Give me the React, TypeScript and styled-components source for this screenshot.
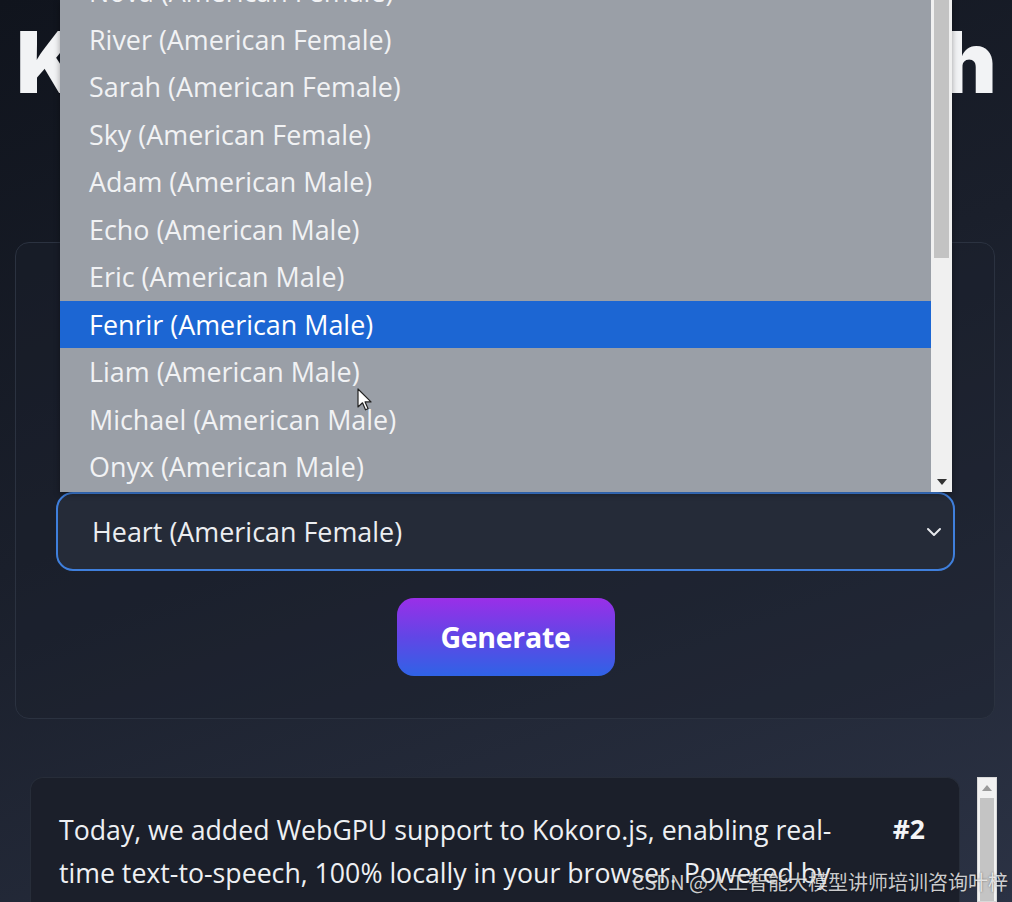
import React from "react";
import styled, { createGlobalStyle } from "styled-components";

const Global = createGlobalStyle`
  html, body { margin: 0; padding: 0; }
  body {
    width: 1012px;
    height: 902px;
    overflow: hidden;
    background: linear-gradient(160deg, #10141d 0%, #1a1f2b 45%, #2b3244 100%);
    font-family: "Open Sans", "Noto Sans", sans-serif;
  }
`;

const Page = styled.div`
  position: relative;
  width: 1012px;
  height: 902px;
  overflow: hidden;
  display: flex;
  flex-direction: column;
`;

const Title = styled.h1`
  margin: 15px 0 0;
  text-align: center;
  white-space: nowrap;
  font-family: Inter, "Liberation Sans", sans-serif;
  font-weight: 900;
  font-size: 85px;
  line-height: 95px;
  letter-spacing: -0.8px;
  color: #f2f3f5;
`;

const Panel = styled.section`
  margin: 132px 17px 0 15px;
  height: 477px;
  box-sizing: border-box;
  border: 1px solid #2b3240;
  border-radius: 14px;
  background: rgba(28, 33, 44, 0.4);
  padding: 0 39px 42px 40px;
  display: flex;
  flex-direction: column;
  justify-content: flex-end;
  align-items: center;
  gap: 27px;
`;

const SelectWrap = styled.div`
  position: relative;
  width: 899px;
  height: 79px;
  box-sizing: border-box;
  border: 2px solid #3f7fdc;
  border-radius: 17px;
  background: #252b38;
  display: flex;
  align-items: center;
  justify-content: space-between;
  padding: 0 9px 0 34px;
  color: #eceef1;
  font-size: 26.9px;
`;

const Chevron = styled.svg`
  width: 20px;
  height: 20px;
`;

const GenerateButton = styled.button`
  width: 218px;
  height: 78px;
  border: none;
  border-radius: 17px;
  background: linear-gradient(180deg, #9a2fe8 0%, #6146e6 50%, #2f63e6 100%);
  color: #ffffff;
  font-family: "Open Sans", sans-serif;
  font-weight: 700;
  font-size: 28.5px;
  letter-spacing: -0.3px;
`;

const Dropdown = styled.div`
  position: absolute;
  left: 2px;
  bottom: calc(100% + 2px);
  width: 892px;
  height: 492px;
  display: flex;
  background: #9a9fa7;
  box-shadow: 0 2px 6px rgba(0, 0, 0, 0.35);
  overflow: hidden;
`;

const OptionList = styled.ul`
  flex: 1;
  margin: -32px 0 0;
  padding: 0;
  list-style: none;
`;

const Option = styled.li<{ $active?: boolean }>`
  height: 47.5px;
  display: flex;
  align-items: center;
  padding-left: 29px;
  font-size: 26.9px;
  color: ${(p) => (p.$active ? "#ffffff" : "#f1f2f4")};
  background: ${(p) => (p.$active ? "#1c66d3" : "transparent")};
`;

const DropScroll = styled.div`
  width: 21px;
  display: flex;
  flex-direction: column;
  background: #f0f0f0;
`;

const DropThumb = styled.div`
  margin: 0 3px;
  height: 258px;
  background: #c3c3c3;
`;

const DropSpacer = styled.div`
  flex: 1;
`;

const ArrowBtn = styled.div`
  height: 20px;
  display: flex;
  align-items: center;
  justify-content: center;
`;

const ListRow = styled.div`
  margin: 58px 0 0 30px;
  display: flex;
  gap: 17px;
  flex: 1;
`;

const Entry = styled.article`
  width: 930px;
  box-sizing: border-box;
  border: 1px solid #272d39;
  border-bottom: none;
  border-radius: 13px 13px 0 0;
  background: #1b1f2a;
  padding: 30px 34px 0 28px;
  display: flex;
  justify-content: space-between;
  gap: 30px;
`;

const EntryText = styled.p`
  margin: 0;
  width: 800px;
  font-size: 26.7px;
  line-height: 43px;
  color: #eef0f3;
`;

const EntryNum = styled.span`
  font-size: 26.5px;
  line-height: 43px;
  font-weight: 700;
  color: #f4f5f7;
`;

const PageScroll = styled.div`
  width: 20px;
  box-sizing: border-box;
  border: 1px solid #d9d9d9;
  background: #f1f1f1;
  display: flex;
  flex-direction: column;
`;

const PageThumb = styled.div`
  flex: 1;
  margin: 0 2px;
  background: #c4c4c4;
`;

const Cursor = styled.svg`
  position: absolute;
  left: 357px;
  top: 388px;
  width: 16px;
  height: 24px;
`;

const Watermark = styled.div`
  position: absolute;
  right: 4px;
  bottom: 6px;
  font-family: "Noto Sans CJK SC", "Noto Sans", sans-serif;
  font-size: 20px;
  color: rgba(255, 255, 255, 0.78);
  text-shadow: 0 0 2px rgba(0, 0, 0, 0.5);
  white-space: nowrap;
`;

const voices = [
  "Nova (American Female)",
  "River (American Female)",
  "Sarah (American Female)",
  "Sky (American Female)",
  "Adam (American Male)",
  "Echo (American Male)",
  "Eric (American Male)",
  "Fenrir (American Male)",
  "Liam (American Male)",
  "Michael (American Male)",
  "Onyx (American Male)",
];

export default function App() {
  return (
    <Page>
      <Global />
      <Title>Kokoro Text-to-Speech</Title>
      <Panel>
        <SelectWrap>
          <span>Heart (American Female)</span>
          <Chevron viewBox="0 0 20 20" fill="none" stroke="#e6e8ec" strokeWidth="2" strokeLinecap="round" strokeLinejoin="round">
            <path d="M4 7l6 6 6-6" />
          </Chevron>
          <Dropdown>
            <OptionList>
              {voices.map((v) => (
                <Option key={v} $active={v.startsWith("Fenrir")}>
                  {v}
                </Option>
              ))}
            </OptionList>
            <DropScroll>
              <DropThumb />
              <DropSpacer />
              <ArrowBtn>
                <svg width="10" height="6" viewBox="0 0 10 6">
                  <path d="M0 0h10L5 6z" fill="#333" />
                </svg>
              </ArrowBtn>
            </DropScroll>
          </Dropdown>
        </SelectWrap>
        <GenerateButton>Generate</GenerateButton>
      </Panel>
      <ListRow>
        <Entry>
          <EntryText>
            Today, we added WebGPU support to Kokoro.js, enabling real-time text-to-speech, 100% locally in your browser. Powered by
          </EntryText>
          <EntryNum>#2</EntryNum>
        </Entry>
        <PageScroll>
          <ArrowBtn>
            <svg width="10" height="6" viewBox="0 0 10 6">
              <path d="M5 0l5 6H0z" fill="#9a9a9a" />
            </svg>
          </ArrowBtn>
          <PageThumb />
        </PageScroll>
      </ListRow>
      <Cursor viewBox="0 0 16 24">
        <path d="M1 1v18l4.5-4.2 3 7 2.6-1.1-3-6.8H14z" fill="#fff" stroke="#222" strokeWidth="1.2" strokeLinejoin="round" />
      </Cursor>
      <Watermark>CSDN @人工智能大模型讲师培训咨询叶梓</Watermark>
    </Page>
  );
}
